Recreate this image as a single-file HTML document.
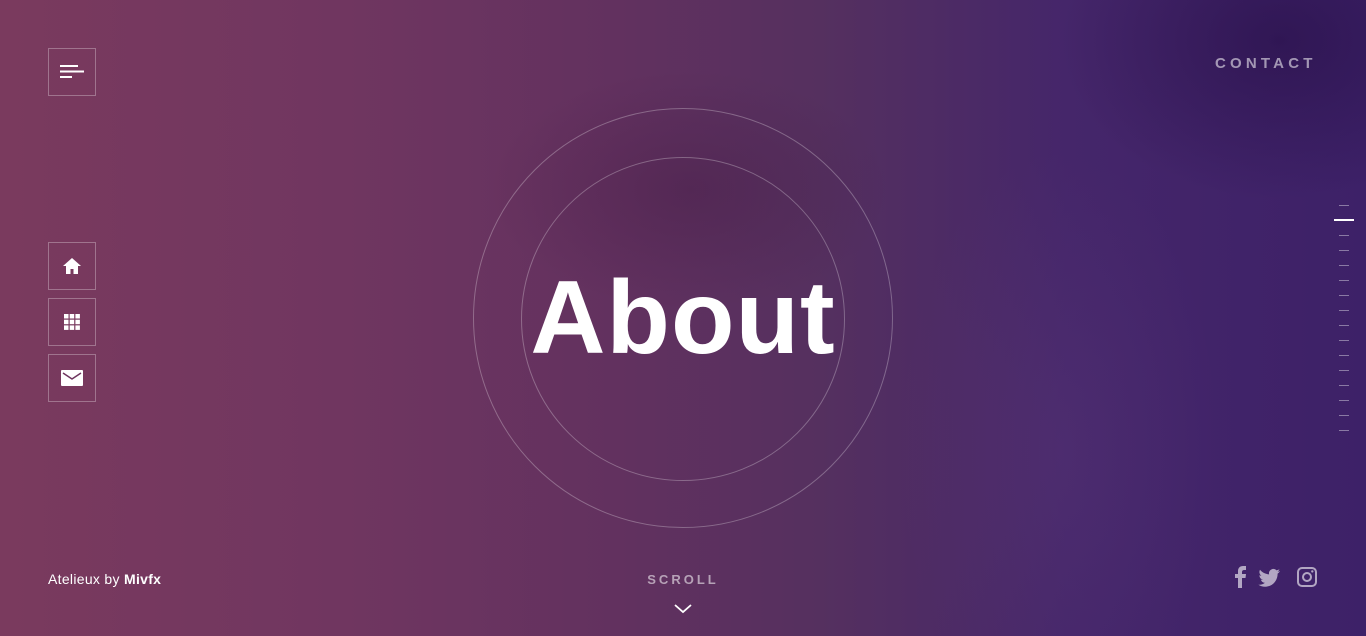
<!DOCTYPE html>
<html><head><meta charset="utf-8"><style>
html,body{margin:0;padding:0;width:1366px;height:636px;overflow:hidden;font-family:"Liberation Sans",sans-serif}
body{position:relative;background:linear-gradient(90deg,#7a3a5e 0%,#703660 25%,#62315f 45%,#55305f 60%,#45266a 78%,#3d2168 100%)}
.shade{position:absolute;inset:0;background:radial-gradient(ellipse 200px 120px at 690px 190px,rgba(60,20,60,.3),transparent),radial-gradient(ellipse 220px 160px at 1280px 40px,rgba(30,8,60,.45),transparent),radial-gradient(ellipse 160px 300px at 1060px 450px,rgba(120,80,140,.15),transparent)}
.box{position:absolute;left:48px;width:46px;height:46px;border:1px solid rgba(255,255,255,.3);display:flex;align-items:center;justify-content:center}
.c{position:absolute;border:1px solid rgba(255,255,255,.28);border-radius:50%}
.t{position:absolute;left:1339px;width:10px;height:1px;background:rgba(255,255,255,.4)}
</style></head><body><div class="shade"></div>
<div class="box" style="top:48px"><svg width="24" height="16"><rect x="0" y="1" width="18" height="2" fill="#fff"/><rect x="0" y="6.5" width="24" height="2" fill="#fff"/><rect x="0" y="12" width="12" height="2" fill="#fff"/></svg></div>
<div class="box" style="top:242px"><svg width="20" height="18"><path d="M10 1L1 9h3v8h4.5v-5h3v5H16V9h3z" fill="#fff"/></svg></div>
<div class="box" style="top:298px"><svg width="16" height="16" fill="#fff"><rect x="0" y="0" width="4.5" height="4.5"/><rect x="5.7" y="0" width="4.5" height="4.5"/><rect x="11.4" y="0" width="4.5" height="4.5"/><rect x="0" y="5.7" width="4.5" height="4.5"/><rect x="5.7" y="5.7" width="4.5" height="4.5"/><rect x="11.4" y="5.7" width="4.5" height="4.5"/><rect x="0" y="11.4" width="4.5" height="4.5"/><rect x="5.7" y="11.4" width="4.5" height="4.5"/><rect x="11.4" y="11.4" width="4.5" height="4.5"/></svg></div>
<div class="box" style="top:354px"><svg width="22" height="16"><rect x="0" y="0" width="22" height="16" rx="1" fill="#fff"/><path d="M2 3l9 6 9-6" stroke="#6e355f" stroke-width="1.5" fill="none"/></svg></div>
<div style="position:absolute;left:1215px;top:55px;color:rgba(255,255,255,.55);font-weight:bold;font-size:15px;letter-spacing:4.2px">CONTACT</div>
<div class="c" style="left:473px;top:108px;width:418px;height:418px"></div>
<div class="c" style="left:521px;top:157px;width:322px;height:322px"></div>
<div style="position:absolute;left:0;width:1366px;top:262px;text-align:center;color:#fff;font-weight:bold;font-size:104px;line-height:112px;letter-spacing:1px">About</div>
<div class="t" style="top:205px"></div><div style="position:absolute;left:1334px;top:219px;width:20px;height:2px;background:#fff"></div>
<div class="t" style="top:235px"></div><div class="t" style="top:250px"></div><div class="t" style="top:265px"></div><div class="t" style="top:280px"></div><div class="t" style="top:295px"></div><div class="t" style="top:310px"></div><div class="t" style="top:325px"></div><div class="t" style="top:340px"></div><div class="t" style="top:355px"></div><div class="t" style="top:370px"></div><div class="t" style="top:385px"></div><div class="t" style="top:400px"></div><div class="t" style="top:415px"></div><div class="t" style="top:430px"></div>
<div style="position:absolute;left:48px;top:571px;color:#fff;font-size:14px;letter-spacing:.3px">Atelieux by <b>Mivfx</b></div>
<div style="position:absolute;left:0;width:1360px;top:572px;text-align:center;color:rgba(255,255,255,.55);font-weight:bold;font-size:13px;letter-spacing:3px;padding-left:3px">SCROLL</div>
<svg style="position:absolute;left:674px;top:603px" width="18" height="12"><path d="M1 2l8 7 8-7" stroke="#fff" stroke-width="1.8" fill="none"/></svg>
<svg style="position:absolute;left:1229px;top:565px" width="92" height="24" fill="rgba(255,255,255,.6)">
<path d="M9 23V13H6V9h3V6c0-3 2-5 5-5h3v4h-2c-1 0-2 .5-2 2v2h4l-.5 4H13v10z"/>
<path d="M51 6c-.8.4-1.6.6-2.5.7.9-.5 1.6-1.4 1.9-2.4-.8.5-1.8.9-2.8 1.1a4.4 4.4 0 0 0-7.5 4C36.5 9.2 33.3 7.5 31 4.8c-1.2 2-.6 4.6 1.4 5.9-.7 0-1.4-.2-2-.5 0 2.1 1.5 4 3.5 4.4-.6.2-1.300.2-2 .1.6 1.8 2.2 3 4.1 3.1-1.900 1.5-4.3 2.2-6.6 1.9 2 1.3 4.3 2 6.7 2 8.1 0 12.7-6.9 12.5-13.1.9-.6 1.6-1.4 2.4-2.5z"/>
<path fill-rule="evenodd" d="M73 2h10a5 5 0 0 1 5 5v10a5 5 0 0 1-5 5H73a5 5 0 0 1-5-5V7a5 5 0 0 1 5-5zm0 2a3 3 0 0 0-3 3v10a3 3 0 0 0 3 3h10a3 3 0 0 0 3-3V7a3 3 0 0 0-3-3zm5 3a5 5 0 1 1 0 10 5 5 0 0 1 0-10zm0 2a3 3 0 1 0 0 6 3 3 0 0 0 0-6zm5.3-3.8a1.2 1.2 0 1 1 0 2.4 1.2 1.2 0 0 1 0-2.4z"/>
</svg>
</body></html>
